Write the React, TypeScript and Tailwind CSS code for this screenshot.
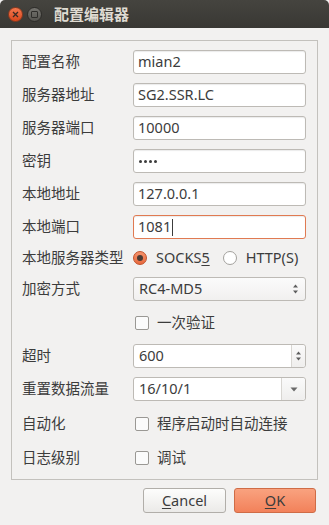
import React from 'react'

const font = { fontFamily: '"Noto Sans", "Noto Sans CJK SC", sans-serif' }

function TextField({ value, focused, children }: { value?: string; focused?: boolean; children?: React.ReactNode }) {
  return (
    <div
      className={
        'flex h-full w-full items-center rounded-[3px] border bg-white px-[4px] text-[14.5px] text-[#3c3c3c] shadow-[inset_0_1px_1px_rgba(0,0,0,0.08)] ' +
        (focused ? 'border-[#e07a52]' : 'border-[#bdbab5]')
      }
    >
      {value}
      {children}
    </div>
  )
}

function UpDown() {
  return (
    <svg width="7" height="12" viewBox="0 0 7 12" className="shrink-0">
      <path d="M3.5 1.5 L6 4.5 L1 4.5 Z" fill="#5d5d5d" />
      <path d="M3.5 10.5 L6 7.5 L1 7.5 Z" fill="#5d5d5d" />
    </svg>
  )
}

function Row({ label, h = 24, children }: { label?: string; h?: number; children: React.ReactNode }) {
  return (
    <div className="flex items-center" style={{ height: h }}>
      <div className="w-[111px] shrink-0 text-[14.5px] text-[#3c3c3c]">{label}</div>
      <div className="flex h-full flex-1 items-center">{children}</div>
    </div>
  )
}

function Check({ text }: { text: string }) {
  return (
    <div className="flex items-center gap-[8px]">
      <div className="h-[14px] w-[14px] rounded-[2px] border border-[#9a9894] bg-[#fbfbfb]" />
      <span className="text-[14.5px] text-[#3c3c3c]">{text}</span>
    </div>
  )
}

export default function App() {
  return (
    <div className="h-[525px] w-[329px] overflow-hidden bg-[#f2f1f0]" style={font}>
      {/* Title bar */}
      <div className="flex h-[28px] items-center rounded-t-[5px] bg-gradient-to-b from-[#45443f] to-[#393834] pl-[8px]">
        <div className="flex h-[15px] w-[15px] items-center justify-center rounded-full border border-[#8c3a1f] bg-gradient-to-b from-[#f4774d] to-[#d9461a]">
          <svg width="7" height="7" viewBox="0 0 7 7">
            <path d="M1 1 L6 6 M6 1 L1 6" stroke="#3a2a24" strokeWidth="1.3" />
          </svg>
        </div>
        <div className="ml-[4px] flex h-[15px] w-[15px] items-center justify-center rounded-full border border-[#2d2c29] bg-gradient-to-b from-[#75746f] to-[#55544f]">
          <div className="h-[7px] w-[7px] rounded-[1px] border border-[#2f2e2b]" />
        </div>
        <span className="ml-[12px] text-[15px] font-bold text-[#dfdbd2]">配置编辑器</span>
      </div>

      {/* Group box */}
      <div className="mx-[11px] mt-[12px] flex h-[440px] flex-col gap-[9px] border border-[#c3c1bd] pl-[10px] pr-[11px] pt-[9px]">
        <Row label="配置名称"><TextField value="mian2" /></Row>
        <Row label="服务器地址"><TextField value="SG2.SSR.LC" /></Row>
        <Row label="服务器端口"><TextField value="10000" /></Row>
        <Row label="密钥">
          <TextField>
            <div className="flex gap-[2px] pl-[1px]">
              <span className="h-[3px] w-[3px] rounded-full bg-[#3c3c3c]" />
              <span className="h-[3px] w-[3px] rounded-full bg-[#3c3c3c]" />
              <span className="h-[3px] w-[3px] rounded-full bg-[#3c3c3c]" />
              <span className="h-[3px] w-[3px] rounded-full bg-[#3c3c3c]" />
            </div>
          </TextField>
        </Row>
        <Row label="本地地址"><TextField value="127.0.0.1" /></Row>
        <Row label="本地端口">
          <TextField focused value="1081">
            <span className="ml-[1px] inline-block h-[17px] w-px bg-[#3c3c3c]" />
          </TextField>
        </Row>
        <Row label="本地服务器类型" h={20}>
          <div className="flex items-center text-[14.5px] text-[#3c3c3c]">
            <div className="flex h-[14px] w-[14px] items-center justify-center rounded-full border border-[#c2512a] bg-gradient-to-b from-[#f5916a] to-[#e86a3e]">
              <div className="h-[6px] w-[6px] rounded-full bg-[#4a3a33]" />
            </div>
            <span className="ml-[9px]">SOCKS<span className="underline underline-offset-2">5</span></span>
            <div className="ml-[13px] h-[14px] w-[14px] rounded-full border border-[#a3a19d] bg-white" />
            <span className="ml-[9px]">HTTP(S)</span>
          </div>
        </Row>
        <Row label="加密方式">
          <div className="flex h-full w-full items-center justify-between rounded-[3px] border border-[#bdbab5] bg-gradient-to-b from-[#fbfbfb] to-[#f1f0ef] pl-[5px] pr-[6px] text-[14.5px] text-[#3c3c3c]">
            RC4-MD5
            <UpDown />
          </div>
        </Row>
        <Row h={25}>
          <div className="-ml-[9px] pl-[11px]"><Check text="一次验证" /></div>
        </Row>
        <Row label="超时">
          <div className="flex h-full w-full rounded-[3px] border border-[#bdbab5] bg-white text-[14.5px] text-[#3c3c3c]">
            <div className="flex flex-1 items-center pl-[5px]">600</div>
            <div className="flex w-[14px] items-center justify-center rounded-r-[3px] border-l border-[#d8d6d2] bg-gradient-to-b from-[#fafafa] to-[#efeeed]">
              <UpDown />
            </div>
          </div>
        </Row>
        <Row label="重置数据流量">
          <div className="flex h-full w-full rounded-[3px] border border-[#bdbab5] bg-white text-[14.5px] text-[#3c3c3c]">
            <div className="flex flex-1 items-center pl-[5px]">16/10/1</div>
            <div className="flex w-[24px] items-center justify-center rounded-r-[3px] border-l border-[#d8d6d2] bg-gradient-to-b from-[#fafafa] to-[#efeeed]">
              <svg width="8" height="5" viewBox="0 0 8 5">
                <path d="M0.5 0.5 L7.5 0.5 L4 4.5 Z" fill="#6a6a6a" />
              </svg>
            </div>
          </div>
        </Row>
        <Row label="自动化" h={28}>
          <div className="pl-[2px]"><Check text="程序启动时自动连接" /></div>
        </Row>
        <Row label="日志级别" h={22}>
          <div className="pl-[2px]"><Check text="调试" /></div>
        </Row>
      </div>

      {/* Buttons */}
      <div className="mr-[13px] mt-[8px] flex justify-end gap-[8px]">
        <button className="flex h-[25px] w-[83px] items-center justify-center rounded-[3px] border border-[#b1aea9] bg-gradient-to-b from-[#fdfdfc] to-[#ebeae8] text-[14.5px] text-[#3c3c3c]">
          <span><span className="underline underline-offset-2">C</span>ancel</span>
        </button>
        <button className="flex h-[25px] w-[82px] items-center justify-center rounded-[3px] border border-[#cf6c46] bg-gradient-to-b from-[#f9a27f] to-[#f2815a] text-[14.5px] text-[#3c3c3c]">
          <span><span className="underline underline-offset-2">O</span>K</span>
        </button>
      </div>
    </div>
  )
}
